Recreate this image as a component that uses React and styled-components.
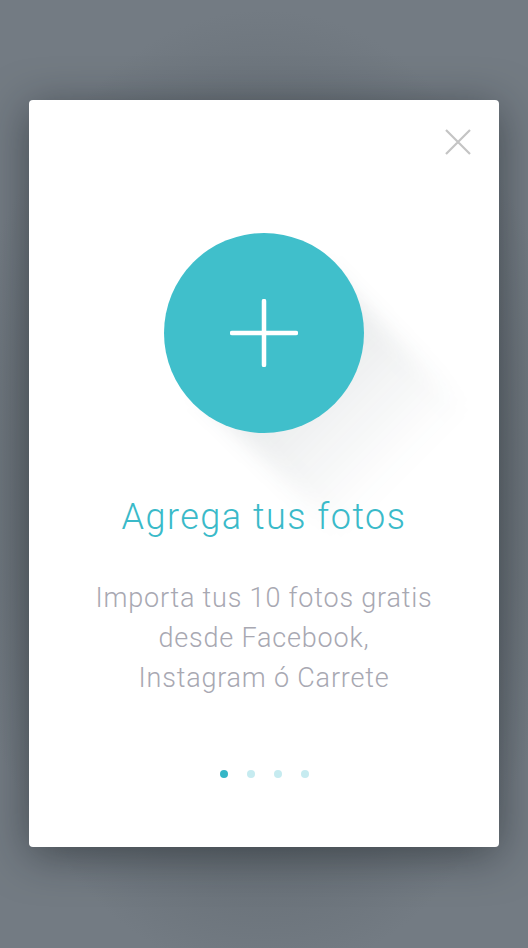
import React, { useState } from 'react';
import styled, { createGlobalStyle } from 'styled-components';

const GlobalStyle = createGlobalStyle`
  html, body {
    margin: 0;
    padding: 0;
    background: #737b83;
    font-family: Roboto, "Noto Sans", Arial, sans-serif;
  }
`

const Screen = styled.div`
  width: 528px;
  height: 948px;
  padding-top: 100px;
  box-sizing: border-box;
  display: flex;
  justify-content: center;
  background: radial-gradient(ellipse 70% 60% at 50% 52%, #4f575d 0%, #5f676e 45%, #737b83 85%);
  overflow: hidden;
`

const Card = styled.div`
  width: 470px;
  height: 747px;
  background: #fff;
  border-radius: 4px;
  box-shadow: 0 8px 44px rgba(20, 26, 30, 0.5);
  display: flex;
  flex-direction: column;
  align-items: center;
  overflow: hidden;
`

const CloseRow = styled.div`
  align-self: stretch;
  display: flex;
  justify-content: flex-end;
  padding: 29px 28px 0 0;
`

const CloseButton = styled.button`
  width: 26px;
  height: 26px;
  padding: 0;
  border: none;
  background: none;
  cursor: pointer;
  display: flex;
`

const Hero = styled.div`
  position: relative;
  margin-top: 78px;
  width: 200px;
  height: 200px;

  &::before {
    content: '';
    position: absolute;
    left: 10px;
    top: 50%;
    width: 180px;
    height: 200px;
    transform-origin: 50% 0;
    transform: rotate(-45deg);
    filter: blur(10px);
    background: linear-gradient(to bottom, rgba(30, 50, 60, 0.13) 0%, rgba(30, 50, 60, 0.05) 60%, rgba(30, 50, 60, 0) 100%);
  }
`

const Circle = styled.div`
  position: relative;
  width: 200px;
  height: 200px;
  border-radius: 50%;
  background: #40bfcb;
  display: flex;
  align-items: center;
  justify-content: center;
`

const Title = styled.h1`
  margin: 64px 0 0;
  font-size: 36px;
  line-height: 40px;
  font-weight: 300;
  color: #3abac9;
  letter-spacing: 1.5px;
  position: relative;
`

const Body = styled.p`
  margin: 41px 0 0;
  font-size: 27px;
  line-height: 40px;
  font-weight: 300;
  color: #a8a8b2;
  letter-spacing: 0.8px;
  text-align: center;
`

const Dots = styled.div`
  margin-top: 72px;
  display: flex;
  gap: 19px;
`

const Dot = styled.span`
  width: 8px;
  height: 8px;
  border-radius: 50%;
  background: ${p => (p.$active ? '#35b6c6' : '#c6ebf0')};
`

export default function App() {
  const [page, setPage] = useState(0);

  return (
    <>
      <GlobalStyle />
      <Screen>
        <Card>
          <CloseRow>
            <CloseButton aria-label="Cerrar">
              <svg width="26" height="26" viewBox="0 0 26 26">
                <path d="M1 1 L25 25 M25 1 L1 25" stroke="#c4c4c4" strokeWidth="2.2" fill="none" />
              </svg>
            </CloseButton>
          </CloseRow>
          <Hero>
            <Circle>
              <svg width="68" height="68" viewBox="0 0 68 68">
                <path d="M34 2 V66 M2 34 H66" stroke="#fff" strokeWidth="4.5" strokeLinecap="round" fill="none" />
              </svg>
            </Circle>
          </Hero>
          <Title>Agrega tus fotos</Title>
          <Body>
            Importa tus 10 fotos gratis<br />
            desde Facebook,<br />
            Instagram ó Carrete
          </Body>
          <Dots>
            {[0, 1, 2, 3].map(i => (
              <Dot key={i} $active={i === page} onClick={() => setPage(i)} />
            ))}
          </Dots>
        </Card>
      </Screen>
    </>
  );
}
